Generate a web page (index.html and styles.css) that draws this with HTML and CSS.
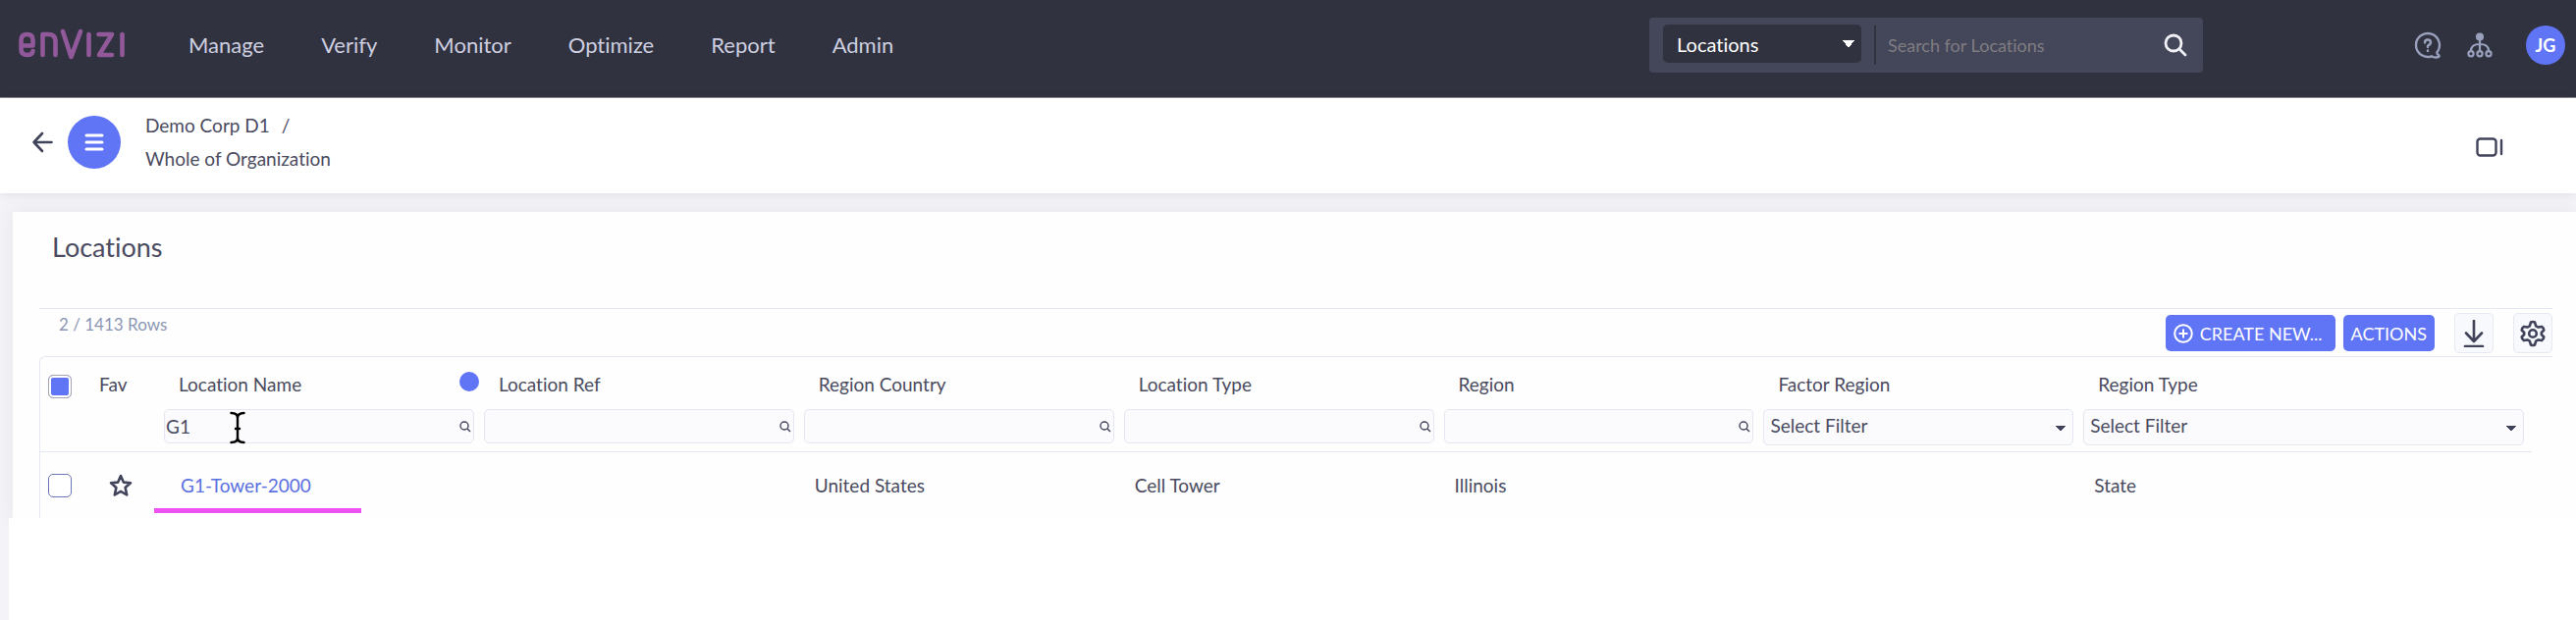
FILE: index.html
```html
<!DOCTYPE html>
<html lang="en">
<head>
<meta charset="utf-8">
<title>Locations</title>
<link rel="stylesheet" href="styles.css">
</head>
<body>
<header class="topbar">
  <a class="logo" href="#" aria-label="Envizi">
    <svg width="110" height="36" viewBox="0 0 110 36" fill="none" stroke="#91599a" stroke-width="4.600" stroke-linecap="round" stroke-linejoin="round"><path d="M4 18.500H15.500V13Q15.500 7 9.700 7Q3.500 7 3.500 13V22Q3.500 28 9.700 28Q15 28 15.500 24M25.500 28V7H31Q38.500 7 38.500 14V28M46 4L54.500 30L64 4M72.500 7V28M82.500 7H96L83 28H96M106.500 7V28"/></svg>
  </a>
  <nav class="menu">
    <a href="#">Manage</a><a href="#">Verify</a><a href="#">Monitor</a><a href="#">Optimize</a><a href="#">Report</a><a href="#">Admin</a>
  </nav>
  <form class="search">
    <select class="scope" aria-label="Search scope"><option>Locations</option></select>
    <input class="query" type="text" placeholder="Search for Locations" aria-label="Search for Locations">
    <button class="plain" type="button" aria-label="Search"><svg width="24" height="24" viewBox="0 0 24 24" fill="none" stroke="#f0f0f6" stroke-width="2.800" stroke-linecap="round"><circle cx="10" cy="10" r="8"/><path d="M16 16L22 22"/></svg></button>
  </form>
  <div class="tools">
    <button class="plain" aria-label="Help"><svg width="28" height="28" viewBox="0 0 28 28" fill="none" stroke="#98a0bb" stroke-width="2.400" stroke-linecap="round" stroke-linejoin="round"><path d="M18 25.300A12 12 0 1 1 23.500 21.300Q23 23 25 24Q26.500 26 24 26.300Q20 27 18 25.300"/><path d="M11 11.500Q11 8.500 14 8.500Q17 8.500 17 11.500Q17 13 14 14.500V16M14 19.500V20"/></svg></button>
    <button class="plain" aria-label="Hierarchy"><svg width="26" height="26" viewBox="0 0 26 26" fill="none" stroke="#98a0bb" stroke-width="2.200"><circle cx="13" cy="4.500" r="3" fill="#98a0bb"/><path d="M13 8V19M4 19Q4 12 13 12Q22 12 22 19"/><circle cx="4" cy="21.800" r="2.600"/><circle cx="13" cy="21.800" r="2.600"/><circle cx="22" cy="21.800" r="2.600"/></svg></button>
    <button class="avatar">JG</button>
  </div>
</header>

<section class="context">
  <button class="plain" aria-label="Back"><svg width="22" height="22" viewBox="0 0 22 22" fill="none" stroke="#41435a" stroke-width="2.600" stroke-linecap="round" stroke-linejoin="round"><path d="M20.500 11H2.500M11 2L2.500 11L11 20"/></svg></button>
  <button class="burger" aria-label="Menu"><svg width="20" height="18" viewBox="0 0 20 18" stroke="#fff" stroke-width="3" stroke-linecap="round"><path d="M2 2H18M2 9H18M2 16H18"/></svg></button>
  <div class="crumbs">
    <div><a href="#">Demo Corp D1</a><span class="slash">/</span></div>
    <div><a href="#">Whole of Organization</a></div>
  </div>
  <button class="plain panel-toggle" aria-label="Toggle panel"><svg width="28" height="20" viewBox="0 0 28 20" fill="none" stroke="#41435a" stroke-width="2.400" stroke-linecap="round"><rect x="1.500" y="1.500" width="19" height="17" rx="3"/><path d="M26 3V17"/></svg></button>
</section>

<main class="card">
  <h1>Locations</h1>
  <div class="toolbar">
    <span class="count">2 / 1413 Rows</span>
    <div class="actions">
      <button class="btn create"><svg width="20" height="20" viewBox="0 0 20 20" fill="none" stroke="#fff" stroke-width="2"><circle cx="10" cy="10" r="8.800"/><path d="M10 5.500V14.500M5.500 10H14.500"/></svg>CREATE NEW...</button>
      <button class="btn">ACTIONS</button>
      <button class="square" aria-label="Download"><svg width="24" height="28" viewBox="0 0 24 28" fill="none" stroke="#41435a" stroke-width="2.600" stroke-linecap="round" stroke-linejoin="round"><path d="M12 1V22M4 13.500L12 22L20 13.500M3 27H21"/></svg></button>
      <button class="square" aria-label="Settings"><svg width="28" height="28" viewBox="0 0 28 28" fill="none" stroke="#41435a" stroke-width="2.600" stroke-linejoin="round"><path d="M12 2.500Q14 1.500 16 2.500L17.200 6.300L19.600 7.600L23 6.900Q25 8 25.300 10.500L22.800 13V15L25.300 17.500Q25 20 23 21.100L19.600 20.400L17.200 21.700L16 25.500Q14 26.500 12 25.500L10.800 21.700L8.400 20.400L5 21.100Q3 20 2.700 17.500L5.200 15V13L2.700 10.500Q3 8 5 6.900L8.400 7.600L10.800 6.300Z"/><circle cx="14" cy="14" r="3.800"/></svg></button>
    </div>
  </div>
  <div class="grid-frame">
  <table class="grid">
    <colgroup><col class="c-check"><col class="c-fav"><col class="c-data"><col class="c-data"><col class="c-data"><col class="c-data"><col class="c-data"><col class="c-data"><col></colgroup>
    <thead>
      <tr class="labels">
        <th><input class="tick some" type="checkbox" aria-label="Select all"></th>
        <th class="fav">Fav</th>
        <th><span class="named">Location Name<i class="dot"></i></span></th>
        <th>Location Ref</th><th>Region Country</th><th>Location Type</th><th>Region</th><th>Factor Region</th><th>Region Type</th>
      </tr>
      <tr class="filters">
        <td></td><td></td>
        <td><div class="field"><input type="text" value="G1" aria-label="Filter Location Name"><svg class="lens" viewBox="0 0 12 12"><circle cx="5" cy="5" r="4"/><path d="M8 8L11 11"/></svg>
          <svg class="caret" width="16" height="34" viewBox="0 0 16 34"><path d="M1.500 2Q8 2 8 7Q8 2 14.500 2M8 6V28M1.500 32Q8 32 8 27Q8 32 14.500 32M6 18H10"/></svg></div></td>
        <td><div class="field"><input type="text" aria-label="Filter Location Ref"><svg class="lens" viewBox="0 0 12 12"><circle cx="5" cy="5" r="4"/><path d="M8 8L11 11"/></svg></div></td>
        <td><div class="field"><input type="text" aria-label="Filter Region Country"><svg class="lens" viewBox="0 0 12 12"><circle cx="5" cy="5" r="4"/><path d="M8 8L11 11"/></svg></div></td>
        <td><div class="field"><input type="text" aria-label="Filter Location Type"><svg class="lens" viewBox="0 0 12 12"><circle cx="5" cy="5" r="4"/><path d="M8 8L11 11"/></svg></div></td>
        <td><div class="field"><input type="text" aria-label="Filter Region"><svg class="lens" viewBox="0 0 12 12"><circle cx="5" cy="5" r="4"/><path d="M8 8L11 11"/></svg></div></td>
        <td><div class="field"><select aria-label="Filter Factor Region"><option>Select Filter</option></select></div></td>
        <td><div class="field"><select aria-label="Filter Region Type"><option>Select Filter</option></select></div></td>
      </tr>
    </thead>
    <tbody>
      <tr>
        <td><input class="tick" type="checkbox" aria-label="Select G1-Tower-2000"></td>
        <td class="star"><button class="plain" aria-label="Favourite"><svg width="24" height="24" viewBox="0 0 24 24" fill="none" stroke="#41435a" stroke-width="2.600" stroke-linejoin="round"><path d="M12 2L14.800 8.600L22 9.300L16.600 14L18.200 21.500L12 17.800L5.800 21.500L7.400 14L2 9.300L9.200 8.600Z"/></svg></button></td>
        <td class="name"><a href="#">G1-Tower-2000</a></td>
        <td></td><td>United States</td><td>Cell Tower</td><td>Illinois</td><td></td><td>State</td>
      </tr>
    </tbody>
  </table>
  </div>
</main>
<div class="below"></div>
</body>
</html>
```

FILE: styles.css
```css
* { box-sizing: border-box; }
html, body { min-height: 100vh; }
body {
  margin: 0;
  display: flex;
  flex-direction: column;
  background: #f4f4f8;
  color: #4a4b60;
  font: 19px/26px Lato, "Noto Sans", sans-serif;
  font-variant-ligatures: none;
}
a { color: inherit; text-decoration: none; }
button, input, select { font: inherit; font-variant-ligatures: none; color: inherit; margin: 0; }
button { cursor: pointer; }
svg { display: block; flex: none; }
.plain { padding: 0; border: 0; background: none; }

.topbar {
  display: flex;
  align-items: center;
  height: 100px;
  padding: 0 11px 8px 18px;
  background: #31323f;
  border-bottom: 1px solid #8b8593;
}
.menu { display: flex; gap: 58px; margin-left: 64px; color: #cdcfe0; font-size: 22px; }
.search {
  display: flex;
  align-items: center;
  width: 564px;
  height: 56px;
  margin-left: auto;
  padding: 0 16px 0 14px;
  background: #444659;
  border-radius: 4px;
}
.scope, .field select { appearance: none; background-repeat: no-repeat; }
.scope {
  width: 202px;
  height: 39px;
  margin-bottom: 2px;
  padding: 0 14px;
  border: 0;
  border-radius: 5px;
  color: #fff;
  font-size: 20px;
  background-color: #31323f;
  background-image: conic-gradient(from -37deg at 50% 100%, #fff 74deg, transparent 0);
  background-size: 12px 8px;
  background-position: right 7px center;
}
.query {
  flex: 1;
  min-width: 0;
  height: 40px;
  margin-left: 13px;
  padding: 0 0 0 12px;
  border: 0;
  border-left: 2px solid #31323f;
  background: none;
  color: #fff;
  font-size: 18px;
}
.query::placeholder { color: #7f7d82; opacity: 1; }
.tools { display: flex; align-items: center; gap: 26px; margin-left: 215px; }
.avatar {
  width: 40px;
  height: 40px;
  margin-left: 8px;
  padding: 0;
  border: 0;
  border-radius: 50%;
  background: #6075f5;
  color: #fff;
  font-size: 18px;
  font-weight: 700;
}

.context {
  display: flex;
  align-items: center;
  height: 97px;
  padding: 0 74px 8px 32px;
  background: #fff;
  box-shadow: 0 2px 10px #00000014;
}
.burger {
  display: grid;
  place-items: center;
  width: 54px;
  height: 54px;
  margin: 0 25px 0 15px;
  border: 0;
  border-radius: 50%;
  background: #6075f5;
}
.crumbs { display: grid; gap: 8px; }
.slash { margin-left: 12px; }
.panel-toggle { margin: 10px 0 0 auto; }

.card { margin: 19px 0 0 13px; padding: 0 24px 0 27px; background: #fefefe; box-shadow: 0 0 20px #00000010; }
h1 { margin: 0; padding: 19px 13px 45px; font-size: 27px; line-height: 34px; font-weight: 400; }
.toolbar { display: flex; justify-content: space-between; height: 49px; border-top: 1px solid #e3e7f1; }
.count { padding: 3px 20px; font-size: 17px; color: #8c96b4; }
.actions { display: flex; align-items: flex-start; padding-top: 4px; gap: 8px; }
.btn {
  display: flex;
  align-items: center;
  gap: 7px;
  height: 37px;
  margin-top: 2px;
  padding: 0 8px;
  border: 0;
  border-radius: 5px;
  background: #6075f5;
  color: #fff;
  font-size: 18px;
}
.create { padding-right: 13px; }
.square {
  display: grid;
  place-items: center;
  width: 40px;
  height: 41px;
  margin-left: 12px;
  padding: 0;
  border: 1px solid #e6e8f2;
  border-radius: 5px;
  background: #f8f9fd;
}

.grid-frame { border: 1px solid #e3e7f1; border-width: 1px 0 0 1px; border-radius: 6px 0 0 0; padding-right: 21px; }
.grid { width: 100%; table-layout: fixed; border-collapse: collapse; text-align: left; }
.c-check { width: 48px; }
.c-fav { width: 73px; }
.c-data { width: 12.84%; }
.grid th { height: 53px; padding: 3px 0 0 20px; font-weight: 400; }
.grid th:first-child { padding: 6px 0 0 8px; }
.grid th.fav { padding-left: 12px; }
.named { display: flex; justify-content: space-between; }
.dot { width: 20px; height: 20px; border-radius: 50%; background: #6075f5; }
.tick {
  appearance: none;
  display: block;
  width: 24px;
  height: 24px;
  border: 1px solid #6a76b8;
  border-radius: 5px;
  background: #fff;
}
.some { border-color: #a3a5b5; background: #6075f5; box-shadow: inset 0 0 0 2px #fff; }
.filters { border-bottom: 1px solid #e3e7f1; }
.filters td { padding: 0 5px 6px; height: 43px; vertical-align: top; }
.filters td:last-child { padding-right: 8px; }
.field { position: relative; }
.field input, .field select {
  display: block;
  width: 100%;
  height: 35px;
  padding: 0 24px 0 1px;
  border: 1px solid #e3e7f1;
  border-radius: 5px;
  background-color: #fbfbfe;
}
.field select {
  height: 37px;
  padding: 0 24px 4px 6px;
  background-image: conic-gradient(from -40deg at 50% 100%, #41435a 80deg, transparent 0);
  background-size: 10px 6px;
  background-position: right 7px top 16px;
}
.lens { position: absolute; right: 3px; top: 12px; width: 12px; height: 12px; fill: none; stroke: #41435a; stroke-width: 1.4; }
.caret { position: absolute; left: 67px; top: 2px; fill: none; stroke: #000; stroke-width: 2.4; stroke-linecap: round; }
.grid tbody td { height: 67px; padding: 2px 0 0 16px; }
.grid tbody td:first-child { padding-left: 8px; }
.grid tbody td.star { padding: 7px 0 0 22px; }
.grid tbody td.name { position: relative; padding-left: 22px; color: #5b70e0; }
.name::after {
  content: "";
  position: absolute;
  left: -5px;
  bottom: 5px;
  width: 211px;
  height: 5px;
  background: #ee52f2;
}
.below { position: relative; flex: 1; margin-left: 9px; background: #fff; }
```
